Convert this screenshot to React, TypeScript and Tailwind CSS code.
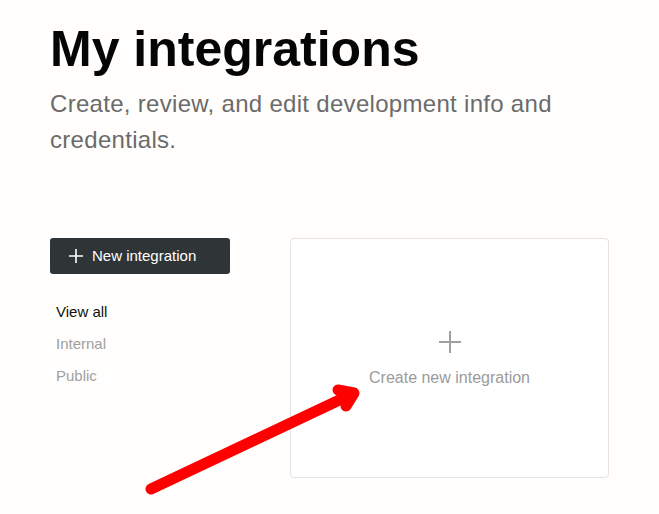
const filters = [
  { label: "View all", active: true },
  { label: "Internal", active: false },
  { label: "Public", active: false },
];

const Arrow = () => (
  <svg
    className="absolute left-0 top-0 pointer-events-none"
    width="659"
    height="514"
    viewBox="0 0 659 514"
    fill="none"
  >
    <path
      d="M151 489L350 395"
      stroke="#ff0000"
      strokeWidth="11"
      strokeLinecap="round"
    />
    <path
      d="M338 390L354 393L346 406"
      stroke="#ff0000"
      strokeWidth="11"
      strokeLinecap="round"
      strokeLinejoin="round"
    />
  </svg>
);

export default function App() {
  return (
    <div
      className="relative min-h-[514px] bg-[#fffefc] px-[50px] pt-[19px]"
      style={{ fontFamily: '"Liberation Sans", Arial, sans-serif' }}
    >
      <h1 className="text-[50px] leading-[60px] font-bold text-[#050505]">
        My integrations
      </h1>
      <p className="mt-[7px] w-[540px] text-[24px] leading-[36px] tracking-[0.3px] text-[#6b6b6b]">
        Create, review, and edit development info and credentials.
      </p>

      <div className="mt-[80px] flex gap-[60px]">
        <div className="w-[180px] shrink-0">
          <button className="flex h-[36px] w-full items-center gap-[9px] rounded-[3px] bg-[#2f3437] pl-[19px] text-[15px] text-white">
            <svg width="14" height="14" viewBox="0 0 14 14" fill="none">
              <path d="M7 0V14M0 7H14" stroke="#ffffff" strokeWidth="1.6" />
            </svg>
            New integration
          </button>
          <nav className="mt-[22px] flex flex-col pl-[6px]">
            {filters.map((f) => (
              <span
                key={f.label}
                className={`text-[15px] leading-[32px] ${
                  f.active ? "text-[#111111]" : "text-[#a0a0a0]"
                }`}
              >
                {f.label}
              </span>
            ))}
          </nav>
        </div>

        <div className="flex h-[240px] w-[320px] flex-col items-center justify-center rounded-[4px] border border-[#e3e3e3] bg-white pt-[5px]">
          <svg width="22" height="22" viewBox="0 0 22 22" fill="none">
            <path d="M11 0V22M0 11H22" stroke="#a0a0a0" strokeWidth="2" />
          </svg>
          <span className="mt-[13px] text-[16px] leading-[24px] text-[#9b9b9b]">
            Create new integration
          </span>
        </div>
      </div>

      <Arrow />
    </div>
  );
}
